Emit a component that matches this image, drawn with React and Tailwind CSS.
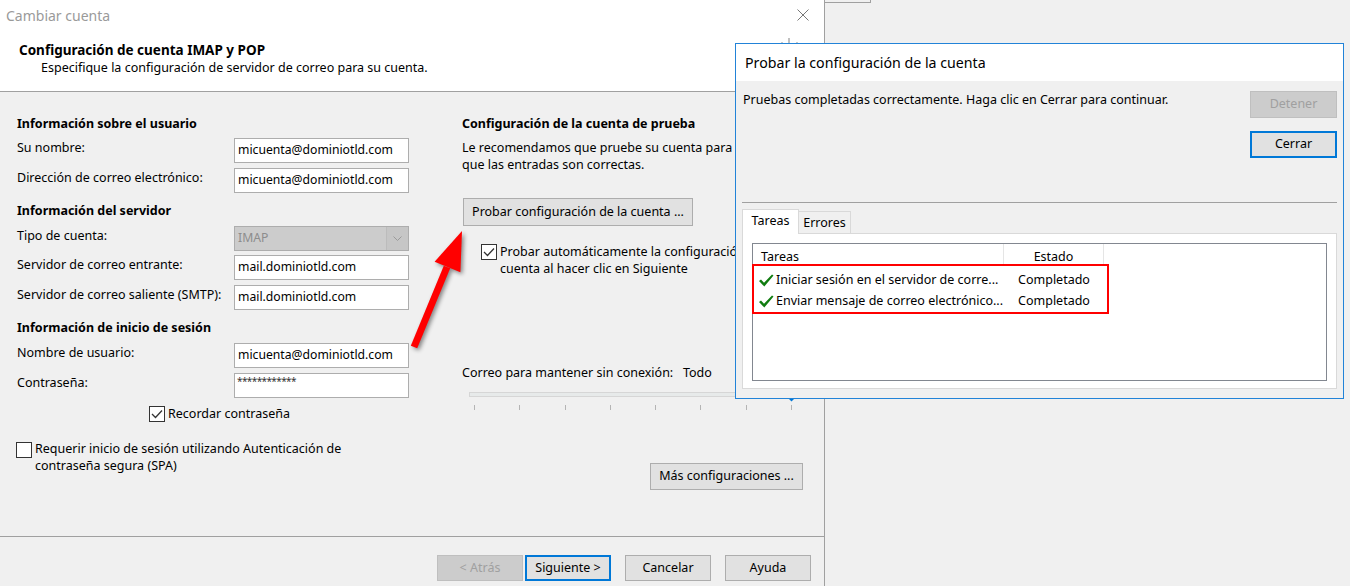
import React from "react";

const Check = ({ checked }) => (
  <div className="flex h-[16px] w-[16px] shrink-0 items-center justify-center border border-[#333333] bg-white">
    {checked && (
      <svg width="12" height="10" viewBox="0 0 12 10">
        <path d="M1 5 L4.5 8.5 L11 1.5" stroke="#333333" strokeWidth="1.3" fill="none" />
      </svg>
    )}
  </div>
);

const Input = ({ value }) => (
  <div className="flex h-[25px] w-[175px] items-center border border-[#adadad] bg-white pl-[3px] text-[12.2px]">
    {value}
  </div>
);

const Row = ({ label, children, className }) => (
  <div className={"flex items-start " + (className || "")}>
    <div className="w-[217px] pt-[2px] leading-[16px]">{label}</div>
    {children}
  </div>
);

const GreenCheck = () => (
  <svg width="16" height="13" viewBox="0 0 16 13" className="shrink-0">
    <path d="M1 7 L3 5.5 L6 8.8 L14 0.5 L15.5 1.6 L6.3 12.5 Z" fill="#107c10" />
  </svg>
);

export default function App() {
  return (
    <div className="relative flex h-[586px] w-[1350px] overflow-hidden bg-[#f0f0f0] font-['Noto_Sans',sans-serif] text-[12.5px] text-black">
      {/* Main dialog */}
      <div className="flex h-[586px] w-[825px] shrink-0 flex-col border-r border-[#a0a0a0]">
        <div className="flex h-[30px] items-center justify-between bg-white pl-[6px] pr-[15px]">
          <span className="text-[14px] text-[#9a9a9a]">Cambiar cuenta</span>
          <svg width="12" height="12" viewBox="0 0 12 12">
            <path d="M0.5 0.5 L11.5 11.5 M11.5 0.5 L0.5 11.5" stroke="#777777" strokeWidth="1" />
          </svg>
        </div>
        <div className="relative h-[62px] border-b border-[#a0a0a0] bg-white pl-[19px] pt-[12px]">
          <div className="text-[13.5px] font-bold leading-[16px]">Configuración de cuenta IMAP y POP</div>
          <div className="mt-[2px] pl-[22px] leading-[16px]">Especifique la configuración de servidor de correo para su cuenta.</div>
          <svg width="20" height="6" viewBox="0 0 20 6" className="absolute left-[780px] top-[8px]">
            <rect x="1" y="4" width="2" height="2" fill="#c8c8c8" />
            <rect x="8" y="0" width="2" height="6" fill="#c0c0c0" />
            <rect x="16" y="4" width="2" height="2" fill="#c8c8c8" />
          </svg>
        </div>

        <div className="relative flex flex-1">
          {/* Left column */}
          <div className="flex w-[462px] flex-col pl-[17px] pt-[24px]">
            <div className="font-bold leading-[16px]">Información sobre el usuario</div>
            <Row label="Su nombre:" className="mt-[6px]"><Input value="micuenta@dominiotld.com" /></Row>
            <Row label="Dirección de correo electrónico:" className="mt-[5px]"><Input value="micuenta@dominiotld.com" /></Row>
            <div className="mt-[10px] font-bold leading-[16px]">Información del servidor</div>
            <Row label="Tipo de cuenta:" className="mt-[7px]">
              <div className="flex h-[25px] w-[175px] items-center border border-[#adadad] bg-[#cccccc]">
                <span className="flex-1 pl-[3px] text-[12.2px] text-[#8d8d8d]">IMAP</span>
                <div className="flex h-full w-[22px] items-center justify-center border-l border-[#bcbcbc] bg-[#c6c6c6]">
                  <svg width="9" height="5" viewBox="0 0 9 5">
                    <path d="M0.5 0.5 L4.5 4.5 L8.5 0.5" stroke="#9a9a9a" fill="none" />
                  </svg>
                </div>
              </div>
            </Row>
            <Row label="Servidor de correo entrante:" className="mt-[4px]"><Input value="mail.dominiotld.com" /></Row>
            <Row label="Servidor de correo saliente (SMTP):" className="mt-[5px]"><Input value="mail.dominiotld.com" /></Row>
            <div className="mt-[10px] font-bold leading-[16px]">Información de inicio de sesión</div>
            <Row label="Nombre de usuario:" className="mt-[7px]"><Input value="micuenta@dominiotld.com" /></Row>
            <Row label="Contraseña:" className="mt-[5px]">
              <div className="h-[25px] w-[175px] border border-[#adadad] bg-white pl-[2px] pt-[1px] text-[10px] leading-[12px] tracking-[-0.6px] text-[#333333]">
                ************
              </div>
            </Row>
            <div className="ml-[132px] mt-[7px] flex items-center gap-[3px]">
              <Check checked />
              <span className="mt-[1px] leading-[16px]">Recordar contraseña</span>
            </div>
            <div className="ml-[-1px] mt-[20px] flex items-start gap-[3px]">
              <Check />
              <span className="mt-[-2px] leading-[17px]">
                Requerir inicio de sesión utilizando Autenticación de
                <br />
                contraseña segura (SPA)
              </span>
            </div>
          </div>

          {/* Right column */}
          <div className="flex w-[341px] flex-col pt-[24px]">
            <div className="font-bold leading-[16px]">Configuración de la cuenta de prueba</div>
            <div className="mt-[7px] whitespace-nowrap leading-[17px]">
              Le recomendamos que pruebe su cuenta para asegurarse de
              <br />
              que las entradas son correctas.
            </div>
            <div className="ml-[1px] mt-[25px] flex h-[28px] w-[230px] items-center justify-center border border-[#adadad] bg-[#e1e1e1]">
              Probar configuración de la cuenta ...
            </div>
            <div className="ml-[19px] mt-[18px] flex items-start gap-[3px]">
              <Check checked />
              <span className="mt-[-1px] whitespace-nowrap leading-[17px]">
                Probar automáticamente la configuración de la
                <br />
                cuenta al hacer clic en Siguiente
              </span>
            </div>
            <div className="mt-[88px] whitespace-pre leading-[16px]">Correo para mantener sin conexión:   Todo</div>
            <div className="relative ml-[7px] mt-[11px] h-[5px] w-[328px] border border-[#d6d6d6] bg-[#e7eaea]">
              <svg width="11" height="17" viewBox="0 0 11 17" className="absolute left-[316px] top-[-8px]">
                <path d="M0 0 H11 V11 L5.5 16.5 L0 11 Z" fill="#0078d7" />
              </svg>
            </div>
            <div className="ml-[12px] mt-[8px] flex h-[5px] w-[318px] justify-between">
              {[0, 1, 2, 3, 4, 5, 6, 7].map((i) => (
                <div key={i} className="h-[5px] w-px bg-[#b4b4b4]" />
              ))}
            </div>
            <div className="mt-[53px] flex h-[27px] w-[153px] items-center justify-center self-end border border-[#adadad] bg-[#e1e1e1]">
              Más configuraciones ...
            </div>
          </div>

          {/* annotation arrow */}
          <svg
            width="80"
            height="140"
            viewBox="0 0 80 140"
            className="absolute left-[400px] top-[128px] drop-shadow-[2px_2px_2px_rgba(0,0,0,0.45)]"
          >
            <polygon points="10.8,125.7 17.2,128.3 50.2,48.3 43.8,45.7" fill="#ff0000" />
            <polygon points="62,11 34.6,41.7 60.4,52.3" fill="#ff0000" />
          </svg>
        </div>

        <div className="flex h-[50px] items-start justify-end border-t border-[#a0a0a0] pr-[13px] pt-[18px]">
          <div className="flex h-[26px] w-[86px] items-center justify-center border border-[#bfbfbf] bg-[#cccccc] text-[#a0a0a0]">&lt; Atrás</div>
          <div className="ml-[2px] flex h-[26px] w-[86px] items-center justify-center border-2 border-[#0078d7] bg-[#e1e1e1]">Siguiente &gt;</div>
          <div className="ml-[14px] flex h-[26px] w-[86px] items-center justify-center border border-[#adadad] bg-[#e1e1e1]">Cancelar</div>
          <div className="ml-[14px] flex h-[26px] w-[86px] items-center justify-center border border-[#adadad] bg-[#e1e1e1]">Ayuda</div>
        </div>
      </div>

      {/* background area */}
      <div className="flex-1">
        <div className="h-[3px] w-[46px] border-b border-r border-[#a0a0a0]" />
      </div>

      {/* Test dialog overlay */}
      <div className="absolute left-[735px] top-[43px] flex h-[356px] w-[609px] flex-col border border-[#2283d8] bg-[#f0f0f0]">
        <div className="flex h-[37px] items-center bg-white pl-[9px] text-[14.2px]">Probar la configuración de la cuenta</div>
        <div className="flex flex-1 flex-col px-[6px]">
          <div className="flex h-[121px] justify-between">
            <div className="pl-[1px] pt-[11px] leading-[16px]">Pruebas completadas correctamente. Haga clic en Cerrar para continuar.</div>
            <div className="flex flex-col gap-[13px] pt-[10px]">
              <div className="flex h-[27px] w-[87px] items-center justify-center border border-[#bfbfbf] bg-[#cccccc] text-[#a0a0a0]">Detener</div>
              <div className="flex h-[27px] w-[87px] items-center justify-center border-2 border-[#0078d7] bg-[#e1e1e1]">Cerrar</div>
            </div>
          </div>
          <div className="h-px bg-[#a0a0a0]" />
          <div className="mt-[6px] flex items-end">
            <div className="relative z-10 -mb-px flex h-[25px] w-[57px] items-start justify-center border border-b-0 border-[#d9d9d9] bg-white pt-[2px]">
              Tareas
            </div>
            <div className="flex h-[22px] w-[52px] items-center justify-center border border-l-0 border-b-0 border-[#d9d9d9] bg-[#f0f0f0] pt-[2px]">
              Errores
            </div>
          </div>
          <div className="h-[156px] border border-[#d9d9d9] bg-white pb-[7px] pl-[9px] pr-[9px] pt-[9px]">
            <div className="relative h-[138px] border border-[#828790] bg-white">
              <div className="flex h-[21px]">
                <div className="w-[251px] border-r border-[#e5e5e5] pl-[8px] pt-[5px] leading-[16px]">Tareas</div>
                <div className="w-[100px] border-r border-[#e5e5e5] pt-[5px] text-center leading-[16px]">Estado</div>
              </div>
              <div className="mt-[5px] flex flex-col">
                <div className="flex h-[21px] items-center">
                  <div className="flex w-[251px] items-center gap-[2px] overflow-hidden whitespace-nowrap pl-[5px]">
                    <GreenCheck />
                    <span>Iniciar sesión en el servidor de corre...</span>
                  </div>
                  <div className="w-[100px] text-center">Completado</div>
                </div>
                <div className="flex h-[21px] items-center">
                  <div className="flex w-[251px] items-center gap-[2px] overflow-hidden whitespace-nowrap pl-[5px]">
                    <GreenCheck />
                    <span>Enviar mensaje de correo electrónico...</span>
                  </div>
                  <div className="w-[100px] text-center">Completado</div>
                </div>
              </div>
              <div className="absolute left-[-1px] top-[20px] h-[50px] w-[357px] border-2 border-[#ff0000]" />
            </div>
          </div>
        </div>
      </div>
    </div>
  );
}
